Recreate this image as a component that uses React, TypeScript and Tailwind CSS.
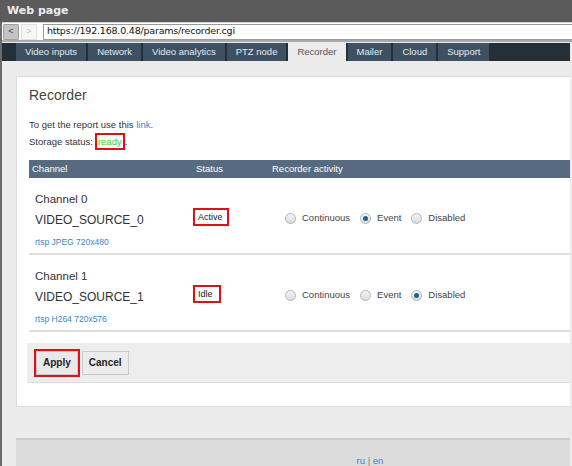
import { useState } from "react"

const tabs = [
  "Video inputs",
  "Network",
  "Video analytics",
  "PTZ node",
  "Recorder",
  "Mailer",
  "Cloud",
  "Support",
]

const modes = ["Continuous", "Event", "Disabled"]

const channels = [
  { name: "Channel 0", source: "VIDEO_SOURCE_0", stream: "rtsp JPEG 720x480", status: "Active", mode: "Event", box: "w-[36px]" },
  { name: "Channel 1", source: "VIDEO_SOURCE_1", stream: "rtsp H264 720x576", status: "Idle", mode: "Disabled", box: "w-[28px]" },
]

function Radio({ checked }: { checked: boolean }) {
  return (
    <span className="w-[11px] h-[11px] rounded-full border border-[#b5b5b5] bg-gradient-to-b from-[#f4f4f4] to-[#dcdcdc] flex items-center justify-center shrink-0">
      {checked && <span className="w-[5px] h-[5px] rounded-full bg-[#1f5f9a]" />}
    </span>
  )
}

export default function App() {
  const [rows, setRows] = useState(channels)

  const setMode = (i: number, mode: string) => {
    setRows(rows.map((r, j) => (j === i ? { ...r, mode } : r)))
  }

  return (
    <div className="w-[572px] h-[466px] overflow-hidden flex flex-col bg-[#6b6b6b] font-['Liberation_Sans',Arial,sans-serif]">
      {/* Title bar */}
      <div className="h-[22px] shrink-0 bg-[#5b5b5b] flex items-center px-[7px] text-[11px] font-bold text-[#ececec] font-['DejaVu_Sans',sans-serif]">
        Web page
      </div>

      <div className="flex-1 flex flex-col ml-[2px] bg-[#ebebeb] min-h-0">
        {/* Address bar */}
        <div className="h-[20px] shrink-0 bg-white border-t border-[#d4d4d4] border-b-2 border-b-[#a9a9a9] flex items-center gap-[2px] pl-[1px]">
          <button className="w-[16px] h-[16px] bg-[#c4c4c4] border border-[#a0a0a0] rounded-[1px] text-[9px] text-[#444] flex items-center justify-center">
            &lt;
          </button>
          <button className="w-[16px] h-[16px] bg-[#f7f7f7] border border-[#e0e0e0] rounded-[1px] text-[9px] text-[#bbb] flex items-center justify-center">
            &gt;
          </button>
          <div className="ml-[4px] flex-1 h-[16px] border border-[#9a9a9a] border-r-0 bg-white flex items-center px-[3px] text-[9.5px] text-[#111] font-['DejaVu_Sans',sans-serif] tracking-[-0.2px]">
            https://192.168.0.48/params/recorder.cgi
          </div>
        </div>

        {/* Tabs */}
        <div className="h-[18px] mt-[1px] shrink-0 bg-[#252f37] flex items-stretch gap-[2px] pl-[14px] mr-[2px]">
          {tabs.map((t) => (
            <div
              key={t}
              className={`px-[9px] flex items-center text-[9.5px] ${
                t === "Recorder" ? "bg-[#ebebeb] text-[#555]" : "bg-[#3e5163] text-[#e4e8ec]"
              }`}
            >
              {t}
            </div>
          ))}
        </div>

        {/* Content */}
        <div className="flex-1 flex flex-col pl-[14px] pt-[15px] min-h-0 mr-[2px]">
          <div className="bg-white border border-[#dcdcdc] border-r-0 h-[331px] shrink-0 pl-[12px] pt-[11px] text-[9.5px] text-[#333]">
            <h1 className="text-[14px] text-[#444] leading-none">Recorder</h1>

            <p className="mt-[15px] leading-[16px]">
              To get the report use this <span className="text-[#3a86c8]">link</span>.
            </p>
            <p className="leading-[16px] flex items-center">
              Storage status:
              <span className="ml-[2px] border-2 border-[#e0101a] px-[1px] leading-[13px] text-[#3cd03c]">ready</span>
              <span>.</span>
            </p>

            {/* Table */}
            <div className="mt-[10px]">
              <div className="h-[18px] bg-[#576b80] text-white text-[9.5px] flex items-center">
                <span className="w-[167px] pl-[3px]">Channel</span>
                <span className="w-[76px]">Status</span>
                <span>Recorder activity</span>
              </div>

              {rows.map((r, i) => (
                <div key={r.name} className="h-[77px] border-b-2 border-[#dedede] flex items-start">
                  <div className="w-[164px] pl-[6px] pt-[14px] flex flex-col">
                    <span className="text-[11.5px] text-[#333] leading-[15px]">{r.name}</span>
                    <span className="text-[12px] text-[#333] leading-[15px] mt-[6px]">{r.source}</span>
                    <span className="text-[8.5px] text-[#3a86c8] leading-[12px] mt-[8px]">{r.stream}</span>
                  </div>
                  <div className="w-[92px] pt-[30px]">
                    <span className={`${r.box} block border-2 border-[#e0101a] pl-[3px] text-[9px] text-[#222] leading-[14px]`}>
                      {r.status}
                    </span>
                  </div>
                  <div className="flex items-center gap-[10px] pt-[33px]">
                    {modes.map((m) => (
                      <label
                        key={m}
                        onClick={() => setMode(i, m)}
                        className="flex items-center gap-[6px] text-[9.5px] text-[#444] cursor-pointer"
                      >
                        <Radio checked={r.mode === m} />
                        {m}
                      </label>
                    ))}
                  </div>
                </div>
              ))}
            </div>

            {/* Buttons */}
            <div className="mt-[11px] -ml-[2px] h-[40px] bg-[#ededed] border-b border-[#dcdcdc] flex items-center gap-[2px] pl-[7px]">
              <div className="border-2 border-[#e0101a]">
                <button className="h-[24px] px-[6px] bg-[#e9e9e9] border border-[#c9c9c9] text-[10px] font-bold text-[#222]">
                  Apply
                </button>
              </div>
              <button className="h-[24px] px-[6px] bg-[#ececec] border border-[#c9c9c9] text-[10px] font-bold text-[#222]">
                Cancel
              </button>
            </div>
          </div>

          {/* Footer */}
          <div className="mt-[31px] flex-1 bg-[#dcdcdc] border-t-2 border-[#cdcdcd] flex justify-center pt-[14px] pl-[154px]">
            <span className="text-[9.5px] text-[#3a86c8]">
              ru <span className="text-[#888]">|</span> en
            </span>
          </div>
        </div>
      </div>
    </div>
  )
}
